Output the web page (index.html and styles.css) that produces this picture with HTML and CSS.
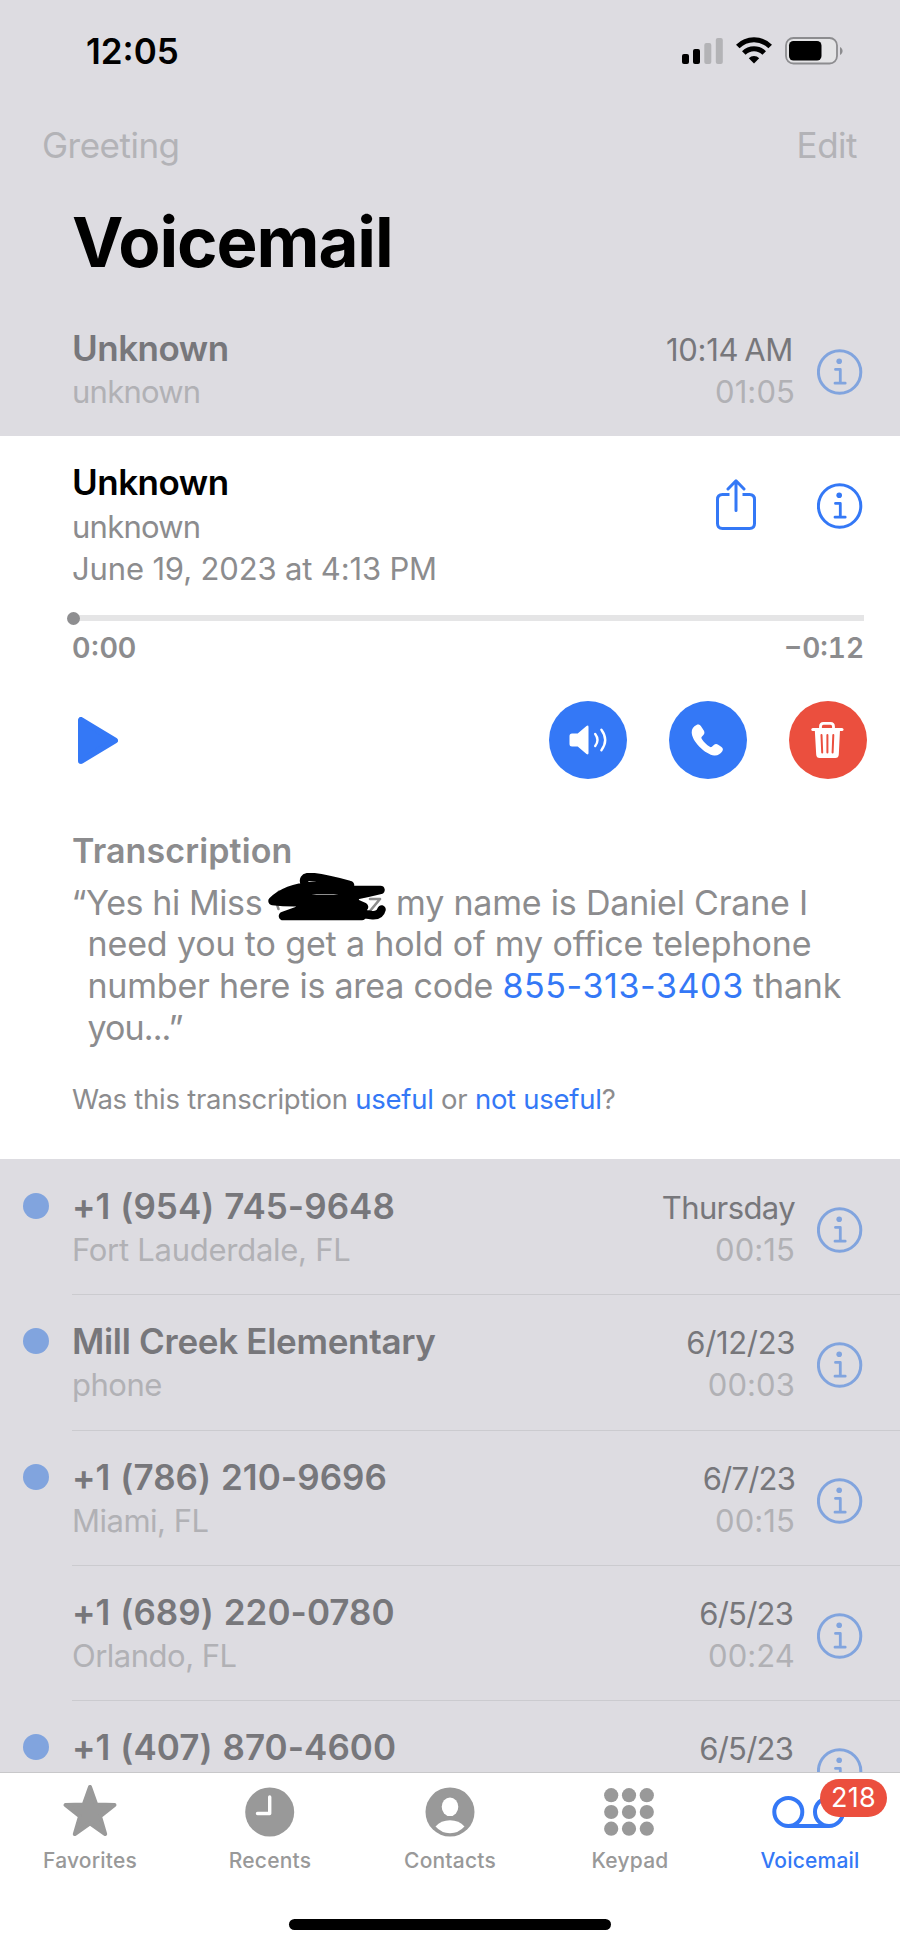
FILE: index.html
```html
<!DOCTYPE html>
<html lang="en">
<head>
    <meta charset="UTF-8">
    <meta name="viewport" content="width=device-width, initial-scale=1.0">
    <title>Voicemail</title>
    <link rel="stylesheet" href="styles.css">
</head>
<body>
    <svg class="sprite">
        <symbol id="icon-info" viewBox="0 0 46 46">
            <circle cx="22.6" cy="23" r="21.2" fill="none" stroke="currentColor" stroke-width="3"/>
            <circle cx="22.2" cy="12.3" r="2.8" fill="currentColor"/>
            <path d="M18.5 20.4h4.8v13.7M18 34.2h10.2" fill="none" stroke="currentColor" stroke-width="2.8" stroke-linecap="round" stroke-linejoin="round"/>
        </symbol>
    </svg>

    <div class="phone">
        <div class="status-bar">
            <span class="clock">12:05</span>
            <svg class="status-icons" viewBox="0 0 162 28">
                <rect x="0" y="17" width="7" height="10" rx="2"/>
                <rect x="11" y="12" width="7" height="15" rx="2"/>
                <rect x="22.3" y="6" width="7" height="21" rx="2" fill="#b3b3b6"/>
                <rect x="33.8" y="1" width="7" height="26" rx="2" fill="#b3b3b6"/>
                <path d="M55.8 9.6a22.8 22.8 0 0 1 32.4 0" fill="none" stroke="#000" stroke-width="5"/>
                <path d="M61.8 16a14.4 14.4 0 0 1 20.4 0" fill="none" stroke="#000" stroke-width="5"/>
                <path d="M72 26.5l-5.2-5.3a7.4 7.4 0 0 1 10.4 0z"/>
                <rect x="104" y="1" width="51" height="25.5" rx="7.5" fill="#e4e4e6" stroke="#8c8c8f" stroke-width="1.8"/>
                <rect x="107" y="4" width="32.5" height="19.5" rx="4.5"/>
                <path d="M158 10c3.4 1.6 3.4 6.4 0 8z" fill="#8c8c8f"/>
            </svg>
        </div>

        <div class="nav">
            <span class="greeting">Greeting</span>
            <span class="edit">Edit</span>
        </div>
        <h1>Voicemail</h1>

        <div class="list">
            <div class="row">
                <div class="main">
                    <div class="name unknown">Unknown</div>
                    <div class="place unknown-label">unknown</div>
                </div>
                <div class="meta">
                    <div class="date time">10:14 AM</div>
                    <div class="length">01:05</div>
                </div>
                <svg class="info"><use href="#icon-info"/></svg>
            </div>

            <div class="open">
                <div class="open-head">
                    <div class="main">
                        <div class="name unknown">Unknown</div>
                        <div class="place unknown-label">unknown</div>
                        <div class="place full-date">June 19, 2023 at 4:13 PM</div>
                    </div>
                    <svg class="share" viewBox="0 0 40 51" fill="none" stroke="currentColor" stroke-width="3" stroke-linecap="round" stroke-linejoin="round">
                        <path d="M13.5 15.5H6.5Q1.5 15.5 1.5 20.5V44.5Q1.5 49.5 6.5 49.5H33.5Q38.5 49.5 38.5 44.5V20.5Q38.5 15.5 33.5 15.5H26.5" stroke-linecap="butt"/>
                        <path d="M20 31.5V2M12 10L20 1.8L28 10"/>
                    </svg>
                    <svg class="info"><use href="#icon-info"/></svg>
                </div>

                <div class="track"><span class="knob"></span></div>
                <div class="times">
                    <span class="elapsed">0:00</span>
                    <span class="remaining">−0:12</span>
                </div>

                <div class="controls">
                    <svg class="play" viewBox="0 0 40 47">
                        <path d="M3 3V44L37 23.5Z" fill="currentColor" stroke="currentColor" stroke-width="6" stroke-linejoin="round"/>
                    </svg>
                    <div class="round">
                        <svg viewBox="0 0 78 78">
                            <path d="M21.5 32.5h7.2L37.5 25q2-1.3 2 1V52q0 2.3-2 1L28.7 45.5H23q-2.5 0-2.5-2.5V35q0-2.5 2.5-2.5z" fill="#fff"/>
                            <path d="M46.2 33q4.6 6 0 12M52.4 28.8q7.6 10.2 0 20.4" fill="none" stroke="#fff" stroke-width="2.4" stroke-linecap="round"/>
                        </svg>
                    </div>
                    <div class="round">
                        <svg viewBox="0 0 78 78">
                            <path d="M27.5 24c1.6-.8 3.5-.3 4.5 1.3l2.8 4.2c1 1.6.8 3.3-.4 4.5l-1.6 1.8c-.6.7-.5 1.4 0 2.2 1.9 3 4.9 5.9 8 7.8.8.5 1.5.5 2.1-.1l1.9-1.7c1.2-1.1 2.8-1.3 4.4-.3l3.3 2.2c1.6 1.1 1.800 2.7.8 4.3-1.9 2.9-4.5 4.5-8.2 4.2-4.1-.4-9.6-3.6-14.700-8.700s-7.500-10.100-7.700-14.100c-.1-3.600 1.700-6 4.800-7.600z" fill="#fff"/>
                        </svg>
                    </div>
                    <div class="round delete">
                        <svg viewBox="0 0 78 78">
                            <path d="M31.5 28V25.5Q31.5 22.3 34.5 22.3H41.5Q44.5 22.3 44.5 25.5V28" fill="none" stroke="#fff" stroke-width="2.8"/>
                            <path d="M23.8 28.5H53" stroke="#fff" stroke-width="3" stroke-linecap="round"/>
                            <path d="M25.8 29H51L49.8 53.5Q49.6 57 46.3 57H30.7Q27.4 57 27.2 53.5Z" fill="#fff"/>
                            <path d="M32.5 34L33.2 51.5M38.4 34V51.5M44.3 34L43.6 51.5" stroke="#eb4f3e" stroke-width="2" stroke-linecap="round"/>
                        </svg>
                    </div>
                </div>

                <h2>Transcription</h2>
                <div class="transcript">
                    <div class="line l1">“Yes hi Miss <span class="redacted"><svg viewBox="0 0 120 50" fill="none" stroke="#000" stroke-linecap="round" stroke-linejoin="round">
                            <path d="M13 18.5Q8 26 12.5 36M104 26H114L104 38" stroke="#8c8c8c" stroke-width="2.6"/>
                            <path d="M40 14Q34 3 46 4T84 12Q72 11 46 13T6.500 28Q50 33 114.5 17H50Q20 21 10 27" stroke-width="8.5"/>
                            <path d="M22 26H80L98 34H42L17 43H96M60 43Q85 38 105 42Q114 43 115.500 36.500" stroke-width="8.5"/>
                            <path d="M26 27H88M34 36H96" stroke-width="10"/>
                        </svg></span> <span class="after">my name is Daniel Crane I</span></div>
                    <div class="line l2">need you to get a hold of my office telephone</div>
                    <div class="line l3">number here is area code <a>855-313-3403</a> thank</div>
                    <div class="line l4">you...”</div>
                </div>
                <div class="feedback">Was this transcription <a>useful</a> or <a>not useful</a>?</div>
            </div>

            <div class="row">
                <span class="dot"></span>
                <div class="main">
                    <div class="name number">+1 (954) 745-9648</div>
                    <div class="place city">Fort Lauderdale, FL</div>
                </div>
                <div class="meta">
                    <div class="date day">Thursday</div>
                    <div class="length">00:15</div>
                </div>
                <svg class="info"><use href="#icon-info"/></svg>
            </div>
            <div class="row">
                <span class="dot"></span>
                <div class="main">
                    <div class="name">Mill Creek Elementary</div>
                    <div class="place">phone</div>
                </div>
                <div class="meta">
                    <div class="date">6/12/23</div>
                    <div class="length">00:03</div>
                </div>
                <svg class="info"><use href="#icon-info"/></svg>
            </div>
            <div class="row">
                <span class="dot"></span>
                <div class="main">
                    <div class="name number">+1 (786) 210-9696</div>
                    <div class="place">Miami, FL</div>
                </div>
                <div class="meta">
                    <div class="date short">6/7/23</div>
                    <div class="length">00:15</div>
                </div>
                <svg class="info"><use href="#icon-info"/></svg>
            </div>
            <div class="row">
                <div class="main">
                    <div class="name number">+1 (689) 220-0780</div>
                    <div class="place">Orlando, FL</div>
                </div>
                <div class="meta">
                    <div class="date short inset">6/5/23</div>
                    <div class="length">00:24</div>
                </div>
                <svg class="info"><use href="#icon-info"/></svg>
            </div>
            <div class="row">
                <span class="dot"></span>
                <div class="main">
                    <div class="name number">+1 (407) 870-4600</div>
                </div>
                <div class="meta">
                    <div class="date short inset">6/5/23</div>
                </div>
                <svg class="info"><use href="#icon-info"/></svg>
            </div>
        </div>

        <div class="tab-bar">
            <div class="tabs">
                <div class="tab">
                    <svg viewBox="0 0 80 56">
                        <path d="M40 5L46.2 22.5L64.5 23L50 34.3L55.2 52L40 41.3L24.8 52L30 34.3L15.5 23L33.8 22.5Z" fill="currentColor" stroke="currentColor" stroke-width="4" stroke-linejoin="round"/>
                    </svg>
                    <span>Favorites</span>
                </div>
                <div class="tab">
                    <svg viewBox="0 0 80 56">
                        <circle cx="39.7" cy="30" r="24.5" fill="currentColor"/>
                        <path d="M39.7 15V31.5H27.5" fill="none" stroke="#fff" stroke-width="3.4" stroke-linecap="round" stroke-linejoin="round"/>
                    </svg>
                    <span>Recents</span>
                </div>
                <div class="tab">
                    <svg viewBox="0 0 80 56">
                        <circle cx="40" cy="30" r="24.5" fill="currentColor"/>
                        <ellipse cx="40" cy="24.8" rx="8.3" ry="9.3" fill="#fff"/>
                        <path d="M25.5 44.5Q31 38.2 40 38.2T54.5 44.5Q48.5 51.2 40 51.2T25.5 44.5Z" fill="#fff"/>
                    </svg>
                    <span>Contacts</span>
                </div>
                <div class="tab">
                    <svg viewBox="0 0 80 56" fill="currentColor">
                        <circle cx="21.2" cy="13.2" r="7.1"/><circle cx="39" cy="13.2" r="7.1"/><circle cx="56.8" cy="13.2" r="7.1"/>
                        <circle cx="21.2" cy="30" r="7.1"/><circle cx="39" cy="30" r="7.1"/><circle cx="56.8" cy="30" r="7.1"/>
                        <circle cx="21.2" cy="46.7" r="7.1"/><circle cx="39" cy="46.7" r="7.1"/><circle cx="56.8" cy="46.7" r="7.1"/>
                    </svg>
                    <span>Keypad</span>
                </div>
                <div class="tab active">
                    <svg viewBox="0 0 80 56" fill="none" stroke="currentColor" stroke-width="4">
                        <circle cx="18.3" cy="29.9" r="14"/>
                        <circle cx="59" cy="29.9" r="14"/>
                        <path d="M18.3 43.9H59"/>
                    </svg>
                    <b class="badge">218</b>
                    <span>Voicemail</span>
                </div>
            </div>
            <div class="home-bar"></div>
        </div>
    </div>
</body>
</html>
```
FILE: styles.css
```css
* {
    margin: 0;
    padding: 0;
    box-sizing: border-box;
}

body {
    font-family: Inter, "Liberation Sans", sans-serif;
    background: #dddce1;
    color: #000;
}

.sprite {
    display: none;
}

.phone {
    width: 900px;
    height: 1947px;
    overflow: hidden;
    display: flex;
    flex-direction: column;
    white-space: nowrap;
}

.status-bar {
    display: flex;
    justify-content: space-between;
    height: 104px;
    padding: 30px 56px 0 86px;
}

.clock {
    font-size: 35px;
    line-height: 42px;
    font-weight: 600;
}

.status-icons {
    width: 162px;
    height: 28px;
    margin-top: 7px;
}

.nav {
    display: flex;
    justify-content: space-between;
    height: 94px;
    padding: 20px 43px 0 42px;
    font-size: 35px;
    line-height: 42px;
    letter-spacing: -0.5px;
    color: #b3b3b7;
}

h1 {
    height: 103px;
    padding-left: 72px;
    font-size: 69px;
    line-height: 88px;
    font-weight: 700;
    letter-spacing: -1.1px;
}

.list {
    height: 1471px;
    overflow: hidden;
}

.row {
    display: flex;
    position: relative;
    height: 135.2px;
    padding: 26px 37.5px 0 72px;
    color: #77777b;
}

.row + .row::before {
    content: "";
    position: absolute;
    left: 72px;
    right: 0;
    top: 0;
    height: 1px;
    background: #cbcbcf;
}

.main {
    flex: 1;
}

.name {
    font-size: 35px;
    line-height: 43px;
    font-weight: 600;
    letter-spacing: -0.3px;
}

.name.unknown {
    letter-spacing: -0.5px;
}

.name.number {
    letter-spacing: 0.05px;
    word-spacing: 1px;
}

.place,
.date,
.length {
    font-size: 31px;
    line-height: 42px;
}

.place {
    padding-top: 1px;
    line-height: 41px;
    letter-spacing: -0.5px;
}

.unknown-label {
    letter-spacing: -0.75px;
}

.full-date {
    letter-spacing: -0.15px;
}

.city {
    letter-spacing: -0.27px;
}

.row .place,
.length {
    color: #b1b1b5;
}

.meta {
    padding-top: 2px;
    margin-right: 21.5px;
    text-align: right;
}

.date {
    letter-spacing: -0.35px;
}

.day {
    letter-spacing: -0.6px;
}

.short {
    letter-spacing: -0.8px;
}

.inset {
    margin-right: 2px;
}

.time {
    margin-right: 2px;
    letter-spacing: -0.3px;
    word-spacing: -2.5px;
}

.length {
    line-height: 41px;
    letter-spacing: 0.1px;
}

.info {
    flex: none;
    width: 46px;
    height: 46px;
    margin-top: 22px;
    color: #81a4de;
}

.dot {
    position: absolute;
    left: 22.7px;
    top: 34px;
    width: 26px;
    height: 26px;
    border-radius: 50%;
    background: #81a4de;
}

.open {
    height: 723px;
    padding: 25px 36px 0 72px;
    background: #fff;
    color: #8c8c8e;
}

.open-head {
    display: flex;
    height: 154px;
}

.open .name {
    color: #000;
}

.open .place {
    padding-top: 1.5px;
    line-height: 41px;
}

.share {
    width: 40px;
    height: 51px;
    margin: 18px 60.5px 0 0;
    color: #3478f6;
}

.open .info {
    color: #3478f6;
    margin-right: 1.5px;
}

.track {
    position: relative;
    height: 6px;
    margin-left: 2px;
    background: #e5e5e6;
}

.knob {
    position: absolute;
    left: -7px;
    top: -3px;
    width: 13px;
    height: 13px;
    border-radius: 50%;
    background: #8e8e90;
}

.times {
    display: flex;
    justify-content: space-between;
    height: 80px;
    padding-top: 9.5px;
    font-size: 28px;
    line-height: 34px;
    font-weight: 600;
}

.remaining {
    font-variant-numeric: tabular-nums;
}

.controls {
    display: flex;
    align-items: center;
    gap: 42px;
    height: 78px;
    margin-right: -2.5px;
}

.play {
    width: 40px;
    height: 47px;
    margin: 0 auto 0 6px;
    color: #3478f6;
}

.round {
    width: 78px;
    height: 78px;
    border-radius: 50%;
    background: #3478f6;
}

.round svg {
    display: block;
}

.delete {
    background: #eb4f3e;
}

h2 {
    margin-top: 51px;
    font-size: 34px;
    line-height: 42px;
    font-weight: 600;
    letter-spacing: 0.12px;
}

.transcript {
    padding-left: 15.5px;
    margin-top: 9px;
}

.line {
    height: 42px;
    font-size: 34px;
    line-height: 42px;
}

.l1 {
    margin-left: -16px;
    letter-spacing: -0.4px;
}

.after {
    letter-spacing: -0.2px;
}

.l2 {
    letter-spacing: -0.14px;
}

.l3 {
    letter-spacing: -0.22px;
}

.l3 a {
    letter-spacing: 0.6px;
}

.l4 {
    letter-spacing: -0.9px;
}

.redacted {
    display: inline-block;
    width: 120px;
    height: 34px;
    margin: 0 1px 0 -5.5px;
}

.redacted svg {
    display: block;
    width: 120px;
    height: 50px;
    margin-top: -8px;
}

a {
    color: #3478f6;
}

.feedback {
    margin-top: 33px;
    font-size: 27.5px;
    line-height: 34px;
    letter-spacing: -0.26px;
}

.tab-bar {
    flex: none;
    height: 175px;
    background: #fff;
    border-top: 1px solid #c8c8ca;
}

.tabs {
    display: flex;
    height: 146px;
    padding-top: 9px;
}

.tab {
    flex: 1;
    position: relative;
    text-align: center;
    color: #999;
    font-size: 21px;
    line-height: 26px;
    font-weight: 500;
    letter-spacing: 0.2px;
}

.tab svg {
    display: block;
    width: 80px;
    height: 56px;
    margin: 0 auto 10px;
}

.active {
    color: #3478f6;
}

.badge {
    position: absolute;
    left: 100px;
    top: -3px;
    width: 67px;
    height: 38px;
    border-radius: 19px;
    background: #eb4f3e;
    color: #fff;
    font-size: 27px;
    line-height: 38px;
    font-weight: 400;
}

.home-bar {
    width: 322px;
    height: 11px;
    margin: 0 auto;
    border-radius: 6px;
    background: #000;
}
```
